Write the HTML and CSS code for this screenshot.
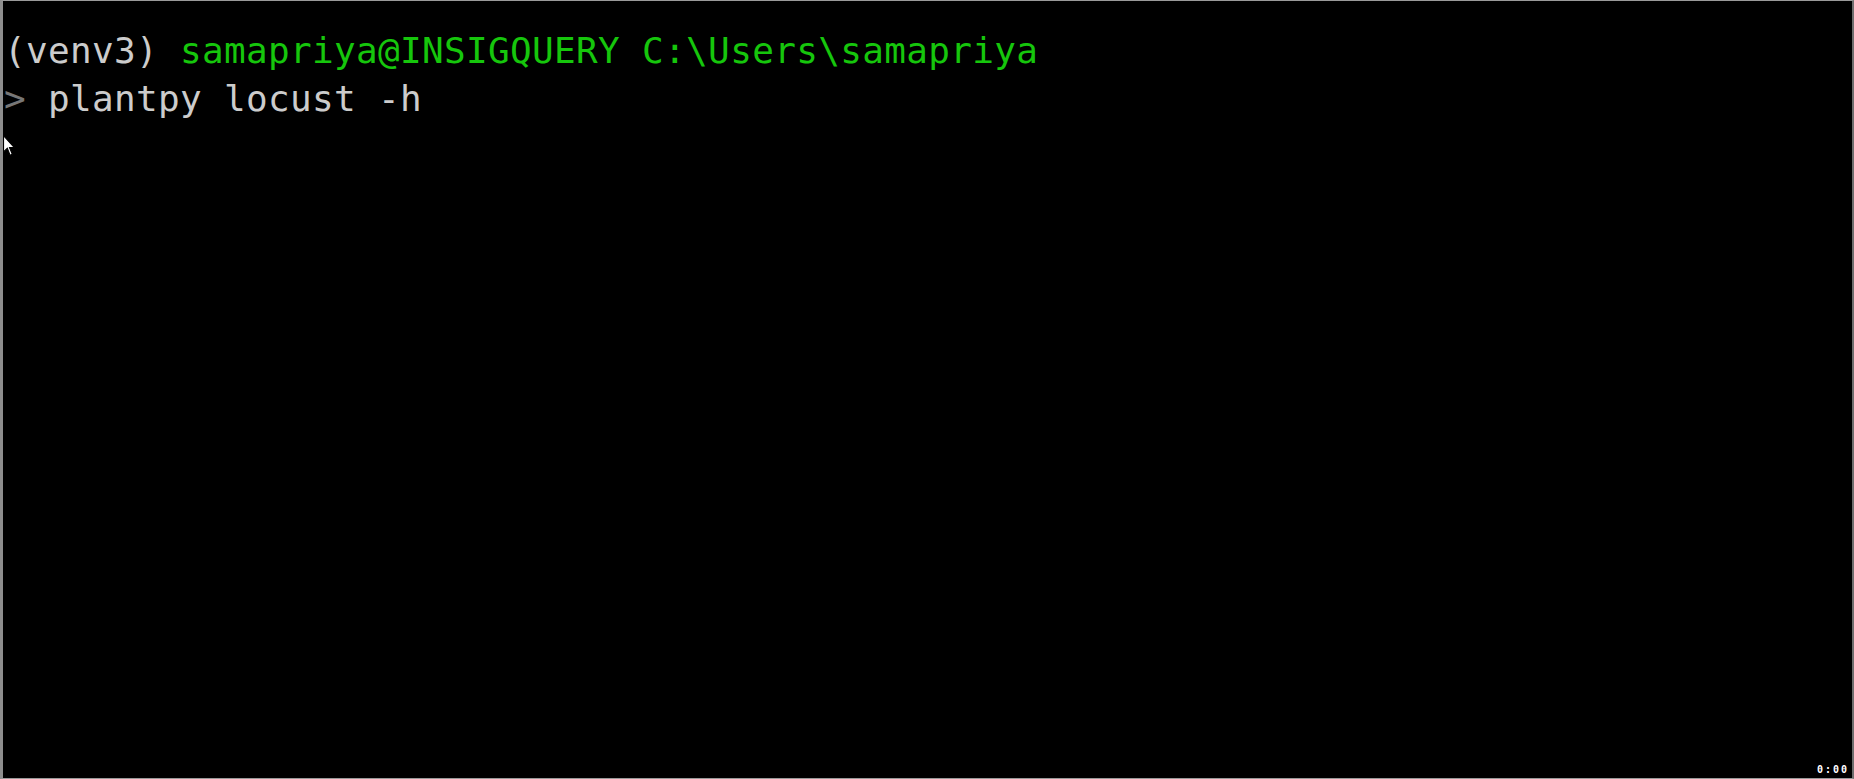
FILE: index.html
```html
<!DOCTYPE html>
<html lang="en">
<head>
<meta charset="utf-8">
<title>Terminal</title>
<link rel="stylesheet" href="styles.css">
</head>
<body>
<div class="terminal">
  <div class="line"><span class="fg">(venv3) </span><span class="green">samapriya@INSIGQUERY C:\Users\samapriya</span></div>
  <div class="line"><span class="dim">&gt;</span><span class="fg"> plantpy locust -h</span></div>
  <svg class="pointer" width="13" height="22" viewBox="0 0 12 20" aria-hidden="true">
    <path d="M0.5 0.5 L0.5 15.5 L4 12 L6.5 18.5 L8.5 17.5 L6 11.5 L10.5 11.5 Z" fill="#ffffff" stroke="#000000" stroke-width="1"/>
  </svg>
  <div class="timer">0:00</div>
</div>
</body>
</html>
```

FILE: styles.css
```css
html, body {
  margin: 0;
  padding: 0;
  background: #000000;
}

.terminal {
  position: relative;
  box-sizing: border-box;
  width: 1854px;
  height: 779px;
  background: #000000;
  border-top: 1px solid #9a9a9a;
  border-left: 3px solid #8e8e8e;
  border-right: 2px solid #6e6e6e;
  border-bottom: 1px solid #9a9a9a;
  padding: 26px 0 0 1px;
  font-family: "DejaVu Sans Mono", "Liberation Mono", monospace;
  font-size: 36px;
  letter-spacing: 0.33px;
  line-height: 48px;
  overflow: hidden;
}

.line {
  white-space: pre;
}

.fg {
  color: #cccccc;
}

.green {
  color: #16c60c;
}

.dim {
  color: #767676;
}

.pointer {
  position: absolute;
  left: 0;
  top: 134px;
}

.timer {
  position: absolute;
  right: -2px;
  bottom: -1px;
  width: 41px;
  height: 16px;
  background: #000000;
  color: #ffffff;
  font-family: "DejaVu Sans Mono", monospace;
  font-weight: bold;
  font-size: 10px;
  letter-spacing: 2px;
  line-height: 12px;
  padding: 1px 0 0 4px;
  box-sizing: border-box;
}
```
